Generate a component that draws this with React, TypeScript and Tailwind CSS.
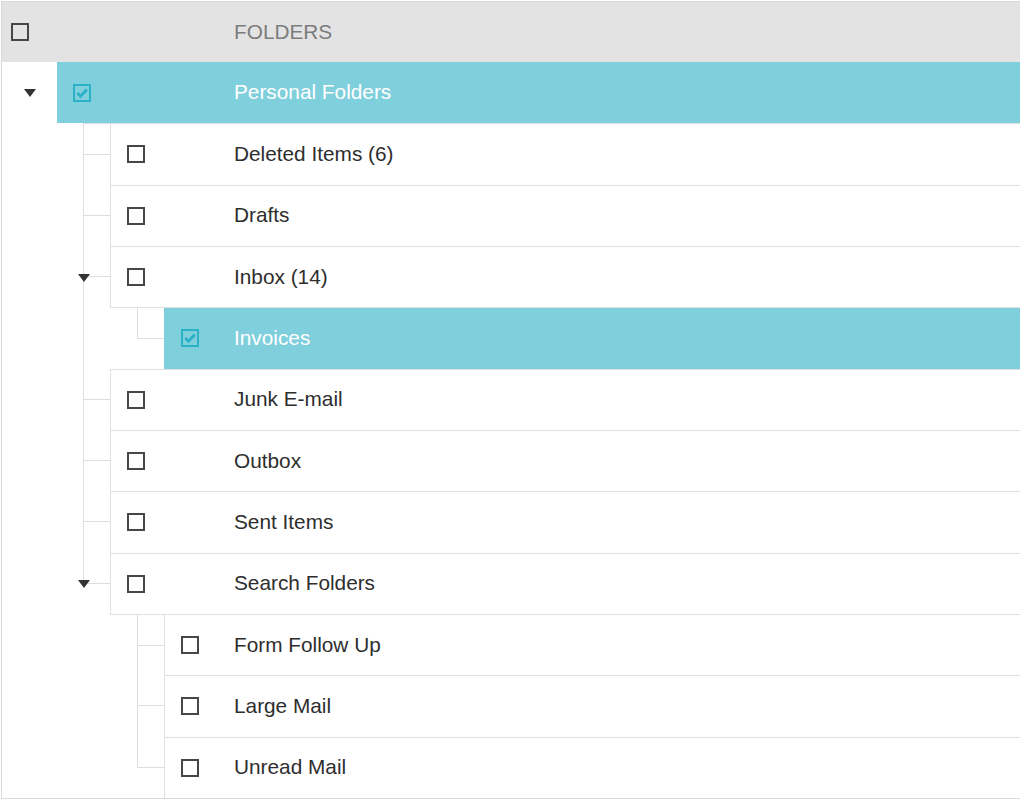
import React from "react";

type Row = {
  level: 0 | 1 | 2;
  text: string;
  selected?: boolean;
  expanded?: boolean;
  first?: boolean;
  last?: boolean;
  cont?: boolean;
};

const rows: Row[] = [
  { level: 0, text: "Personal Folders", selected: true, expanded: true },
  { level: 1, text: "Deleted Items (6)", first: true },
  { level: 1, text: "Drafts" },
  { level: 1, text: "Inbox (14)", expanded: true },
  { level: 2, text: "Invoices", selected: true, first: true, last: true, cont: true },
  { level: 1, text: "Junk E-mail" },
  { level: 1, text: "Outbox" },
  { level: 1, text: "Sent Items" },
  { level: 1, text: "Search Folders", last: true, expanded: true },
  { level: 2, text: "Form Follow Up", first: true },
  { level: 2, text: "Large Mail" },
  { level: 2, text: "Unread Mail", last: true },
];

function Arrow() {
  return (
    <svg width="12" height="8" viewBox="0 0 12 8" className="block">
      <polygon points="0,0 12,0 6,8" fill="#333333" />
    </svg>
  );
}

function CheckBox({ checked }: { checked?: boolean }) {
  if (checked) {
    return (
      <div className="w-[18px] h-[18px] border-2 border-[#2bb2c7] border-l-dotted flex items-center justify-center shrink-0">
        <svg width="14" height="14" viewBox="0 0 14 14">
          <polyline
            points="2.3,7 5.5,10.2 11.8,3.6"
            fill="none"
            stroke="#2bb2c7"
            strokeWidth="3"
          />
        </svg>
      </div>
    );
  }
  return <div className="w-[18px] h-[18px] border-2 border-[#474747] bg-white shrink-0" />;
}

function Connector({ first, last, arrow }: { first?: boolean; last?: boolean; arrow?: boolean }) {
  return (
    <div className={`relative w-[27px] shrink-0 flex flex-col ${first ? "border-t border-[#e0e0e0]" : ""}`}>
      <div className="flex-1 border-l border-b border-[#dedede]" />
      <div className={`flex-1 ${last ? "" : "border-l border-[#dedede]"}`} />
      {arrow && (
        <div className="absolute left-[-5px] top-1/2 -translate-y-1/2 mt-px">
          <Arrow />
        </div>
      )}
    </div>
  );
}

function Content({ row, firstWidth }: { row: Row; firstWidth: string }) {
  const sel = row.selected;
  const borders =
    row.level === 0
      ? ""
      : `border-t border-l border-t-[#e0e0e0] ${sel ? "border-l-[#80cfdc]" : "border-l-[#e0e0e0]"}`;
  return (
    <div className={`flex-1 flex items-center ${borders} ${sel ? "bg-[#80cfdc]" : "bg-white"}`}>
      <div className={`${firstWidth} pl-4 flex items-center shrink-0`}>
        <CheckBox checked={sel} />
      </div>
      <span className={sel ? "text-white" : "text-[#2e2e2e]"}>{row.text}</span>
    </div>
  );
}

function TreeRow({ row }: { row: Row }) {
  if (row.level === 0) {
    return (
      <div className="flex h-[61.333px]">
        <div className="w-[55px] shrink-0 flex items-center justify-center pl-px">
          <Arrow />
        </div>
        <Content row={row} firstWidth="w-[177px]" />
      </div>
    );
  }
  if (row.level === 1) {
    return (
      <div className="flex h-[61.333px]">
        <div className="w-[81px] shrink-0" />
        <Connector first={row.first} last={row.last} arrow={row.expanded} />
        <Content row={row} firstWidth="w-[123px]" />
      </div>
    );
  }
  return (
    <div className="flex h-[61.333px]">
      <div className="w-[81px] shrink-0" />
      <div className={`w-[27px] shrink-0 ${row.cont ? "border-l border-[#dedede]" : ""}`} />
      <div className={`w-[27px] shrink-0 ${row.first ? "border-t border-[#e0e0e0]" : ""}`} />
      <Connector first={row.first} last={row.last} />
      <Content row={row} firstWidth="w-[69px]" />
    </div>
  );
}

export default function App() {
  return (
    <div className="w-[1020px] h-[799px] overflow-hidden bg-white font-['Liberation_Sans',Arial,sans-serif] text-[20.8px] leading-none">
      <div className="ml-px mt-px w-[1040px] border border-[#d9d9d9] bg-white">
        <div className="h-[60px] bg-[#e3e3e3] flex items-center">
          <div className="w-[232px] pl-[9px] shrink-0 flex items-center">
            <div className="w-[18px] h-[18px] border-2 border-[#474747]" />
          </div>
          <span className="text-[#7c7c7c]">FOLDERS</span>
        </div>
        {rows.map((r, i) => (
          <TreeRow key={i} row={r} />
        ))}
      </div>
    </div>
  );
}
